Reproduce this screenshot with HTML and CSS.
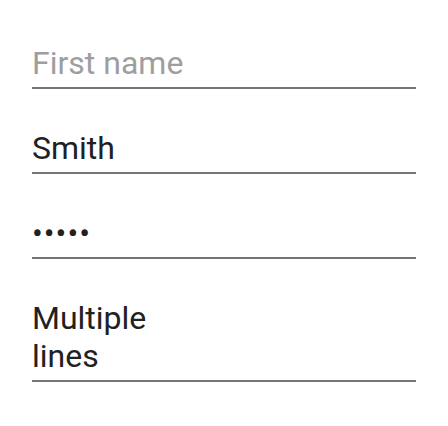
FILE: index.html
```html
<!DOCTYPE html>
<html lang="en">
<head>
<meta charset="utf-8">
<title>Text fields</title>
<link rel="stylesheet" href="styles.css">
</head>
<body>
<form class="form">
  <div class="field"><span class="placeholder">First name</span></div>
  <div class="field"><span class="value">Smith</span></div>
  <div class="field"><span class="value secret">•••••</span></div>
  <div class="field multiline"><span class="value">Multiple<br>lines</span></div>
</form>
</body>
</html>
```

FILE: styles.css
```css
html, body {
  margin: 0;
  padding: 0;
  background: #ffffff;
}

body {
  font-family: Roboto, "Noto Sans", sans-serif;
}

.form {
  display: flex;
  flex-direction: column;
  gap: 41px;
  padding: 45px 32px 0;
  margin: 0;
}

.field {
  font-size: 32px;
  line-height: 37.5px;
  letter-spacing: 0;
  padding: 0 0 4.5px;
  border-bottom: 2px solid #757575;
  color: #212121;
}

.secret {
  letter-spacing: 1px;
}

.placeholder {
  color: #9e9e9e;
}

.value {
  color: #212121;
}
```
